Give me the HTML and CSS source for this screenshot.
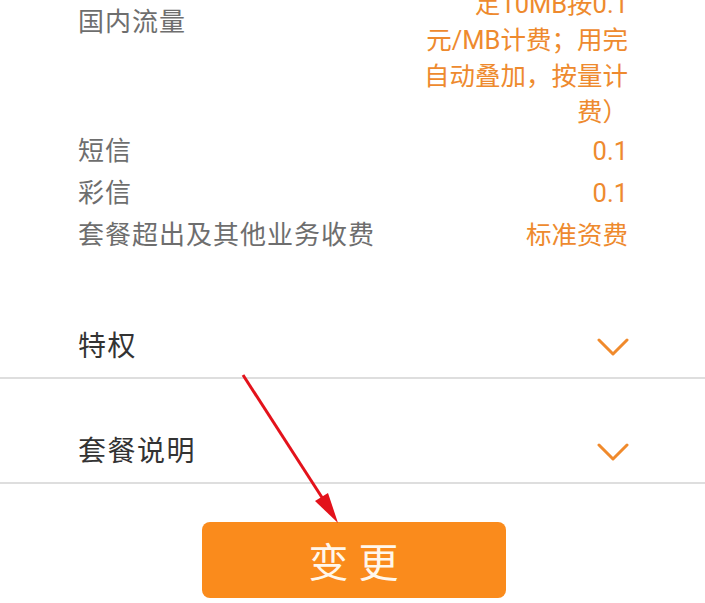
FILE: index.html
```html
<!DOCTYPE html>
<html lang="zh-CN">
<head>
<meta charset="utf-8">
<title>套餐详情</title>
<link rel="stylesheet" href="styles.css">
</head>
<body>
<main class="page">
  <ul class="fees">
    <li class="fee">
      <span class="fee-label">国内流量</span>
      <span class="fee-value fee-value-multi">0.29元/MB（超<br>出后每日不<br>足10MB按0.1<br>元/MB计费；用完<br>自动叠加，按量计<br>费）</span>
    </li>
    <li class="fee">
      <span class="fee-label">短信</span>
      <span class="fee-value">0.1</span>
    </li>
    <li class="fee">
      <span class="fee-label">彩信</span>
      <span class="fee-value">0.1</span>
    </li>
    <li class="fee">
      <span class="fee-label">套餐超出及其他业务收费</span>
      <span class="fee-value">标准资费</span>
    </li>
  </ul>

  <div class="section">
    <span class="section-title">特权</span>
    <svg class="chevron" viewBox="0 0 32 18" width="32" height="18" aria-hidden="true">
      <polyline points="2,2 16,16 30,2" />
    </svg>
  </div>
  <div class="section">
    <span class="section-title">套餐说明</span>
    <svg class="chevron" viewBox="0 0 32 18" width="32" height="18" aria-hidden="true">
      <polyline points="2,2 16,16 30,2" />
    </svg>
  </div>

  <div class="actions">
    <button class="change-btn" type="button">变更</button>
  </div>
</main>

<svg class="annotation" viewBox="0 0 705 603" width="705" height="603" aria-hidden="true">
  <line x1="243" y1="375" x2="323" y2="499" />
  <polygon points="338,523 328,493 315,501" />
</svg>
</body>
</html>
```

FILE: styles.css
```css
html, body {
  margin: 0;
  padding: 0;
  background: #ffffff;
}

body {
  width: 705px;
  height: 603px;
  overflow: hidden;
  position: relative;
  font-family: Roboto, "Noto Sans CJK SC", "Noto Sans", sans-serif;
}

.page {
  display: flex;
  flex-direction: column;
}

.fees {
  list-style: none;
  margin: -86px 0 0;
  padding: 0 77px 18px 78px;
  display: flex;
  flex-direction: column;
}

.fee {
  display: flex;
  justify-content: space-between;
  align-items: center;
  line-height: 42px;
}

.fee-label {
  font-size: 26px;
  letter-spacing: 1px;
  color: #6e6e6e;
}

.fee-value {
  font-size: 25.5px;
  color: #ee8a2e;
  text-align: right;
}

.fee-value-multi {
  line-height: 36px;
}

.section {
  display: flex;
  justify-content: space-between;
  align-items: center;
  padding: 53px 76px 10px 78px;
  line-height: 40px;
  border-bottom: 2px solid #dedede;
}

.section-title {
  font-size: 28px;
  letter-spacing: 1.5px;
  color: #333333;
}

.chevron {
  display: block;
}

.chevron polyline {
  fill: none;
  stroke: #f08a2c;
  stroke-width: 3;
  stroke-linecap: round;
  stroke-linejoin: round;
}

.actions {
  display: flex;
  justify-content: center;
  padding-top: 38px;
  padding-left: 2px;
}

.change-btn {
  width: 304px;
  height: 76px;
  border: none;
  border-radius: 8px;
  background: #fa8b1c;
  color: #fff7ec;
  font-family: "Noto Sans CJK SC", sans-serif;
  font-size: 40px;
  font-weight: 400;
  letter-spacing: 10px;
  text-indent: 10px;
  padding: 0;
}

.annotation {
  position: absolute;
  left: 0;
  top: 0;
  pointer-events: none;
}

.annotation line {
  stroke: #e3121b;
  stroke-width: 3;
}

.annotation polygon {
  fill: #e3121b;
}
```
